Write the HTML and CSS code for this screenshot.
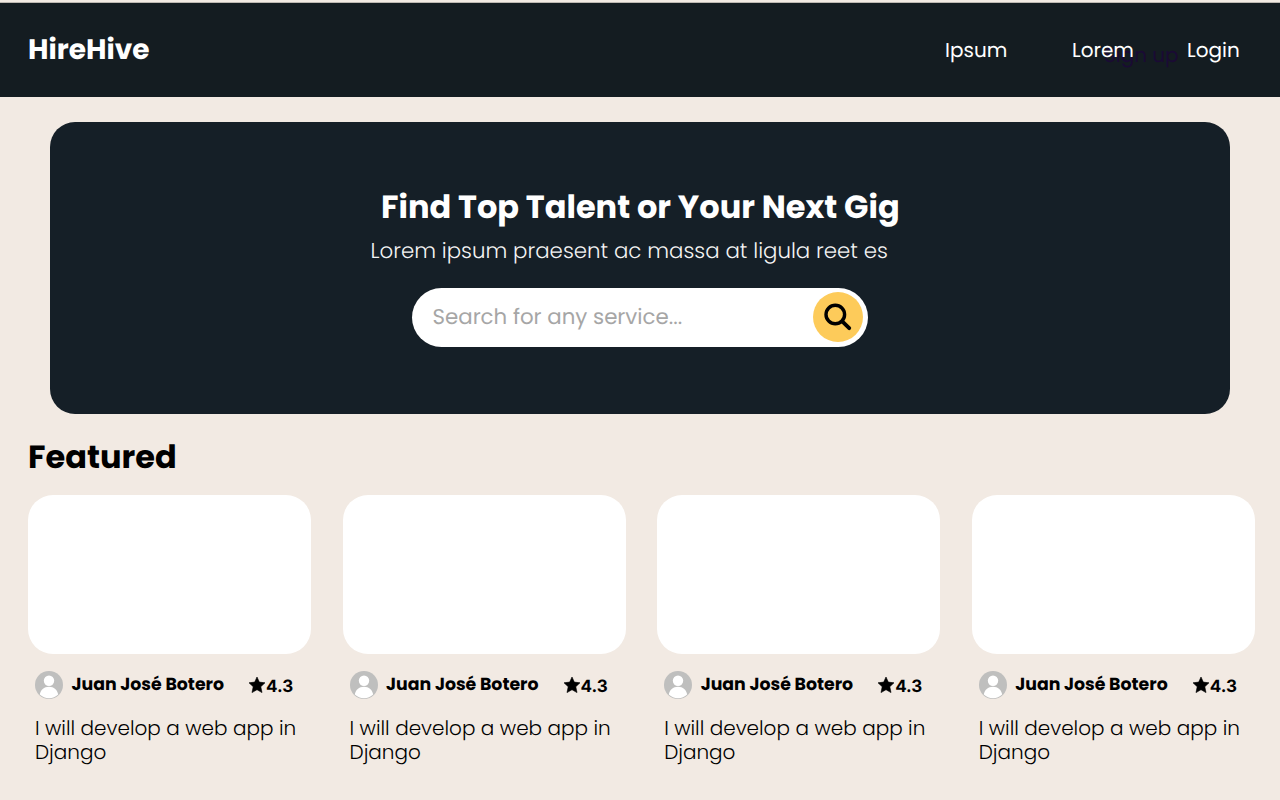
FILE: index.html
```html
<!DOCTYPE html>
<html lang="en">
<head>
<meta charset="utf-8">
<title>HireHive</title>
<link rel="stylesheet" href="styles.css">
</head>
<body>
<svg class="sprite" aria-hidden="true">
  <symbol id="avatar" viewBox="0 0 28 28">
    <circle cx="14" cy="14" r="14" fill="#bfbfbe"/>
    <circle cx="14" cy="9.800" r="5.200" fill="#fff"/>
    <path d="M4.800 23.600C5.500 18.800 9 15.700 14 15.700s8.500 3.100 9.200 7.900A13.300 13.300 0 0 1 14 27.200a13.300 13.300 0 0 1-9.200-3.600z" fill="#fff"/>
  </symbol>
  <symbol id="star" viewBox="0 0 16 16">
    <path d="M8 0l2.300 5.100 5.700.7-4.200 3.900 1.200 5.900L8 12.700l-5 2.900 1.200-5.900L0 5.800l5.700-.7z" stroke="#000" stroke-width=".6" stroke-linejoin="round"/>
  </symbol>
</svg>
<header class="navbar">
  <a class="logo">HireHive</a>
  <nav class="links">
    <a class="link link-ipsum">Ipsum</a>
    <a class="link link-lorem">Lorem</a>
    <a class="link link-login">Login</a>
    <a class="signup">Sign up</a>
  </nav>
</header>
<main>
  <section class="hero">
    <h1 class="hero-title">Find Top Talent or Your Next Gig</h1>
    <p class="hero-text">Lorem ipsum praesent ac massa at ligula reet es</p>
    <div class="search">
      <span class="placeholder">Search for any service...</span>
      <span class="search-button">
        <svg width="28" height="28" viewBox="0 0 28 28" fill="none" stroke="#000" stroke-linecap="round">
          <circle cx="11.300" cy="11.500" r="9.300" stroke-width="3.400"/>
          <path d="M18.500 18.700l6.700 6.500" stroke-width="3.900"/>
        </svg>
      </span>
    </div>
  </section>
  <section class="featured">
    <h2 class="featured-title">Featured</h2>
    <div class="cards">
      <article class="card">
        <div class="thumb"></div>
        <div class="meta"><svg class="avatar"><use href="#avatar"/></svg><span class="name">Juan José Botero</span><svg class="star"><use href="#star"/></svg><span class="rating">4.3</span></div>
        <p class="desc">I will develop a web app in<br>Django</p>
      </article>
      <article class="card">
        <div class="thumb"></div>
        <div class="meta"><svg class="avatar"><use href="#avatar"/></svg><span class="name">Juan José Botero</span><svg class="star"><use href="#star"/></svg><span class="rating">4.3</span></div>
        <p class="desc">I will develop a web app in<br>Django</p>
      </article>
      <article class="card">
        <div class="thumb"></div>
        <div class="meta"><svg class="avatar"><use href="#avatar"/></svg><span class="name">Juan José Botero</span><svg class="star"><use href="#star"/></svg><span class="rating">4.3</span></div>
        <p class="desc">I will develop a web app in<br>Django</p>
      </article>
      <article class="card">
        <div class="thumb"></div>
        <div class="meta"><svg class="avatar"><use href="#avatar"/></svg><span class="name">Juan José Botero</span><svg class="star"><use href="#star"/></svg><span class="rating">4.3</span></div>
        <p class="desc">I will develop a web app in<br>Django</p>
      </article>
    </div>
  </section>
</main>
</body>
</html>
```
FILE: styles.css
```css
* { box-sizing: border-box; }
body {
  margin: 0;
  padding-top: 2px;
  height: 800px;
  overflow: hidden;
  background: #f2eae3;
  color: #000;
  font-family: Poppins, Inter, sans-serif;
  text-rendering: geometricPrecision;
  white-space: nowrap;
}
h1, h2, p { margin: 0; }
.sprite { position: absolute; width: 0; height: 0; }

.navbar {
  position: relative;
  display: flex;
  justify-content: space-between;
  align-items: center;
  height: 95px;
  padding: 0 0 0 28px;
  border-top: 1px solid #bdb8b2;
  background: #141c21;
  color: #fff;
}
.logo { font-size: 28px; font-weight: 700; line-height: 40px; }
.links { display: flex; font-size: 20px; line-height: 30px; }
.link { position: relative; z-index: 1; }
.link-ipsum { width: 127px; }
.link-lorem { width: 115px; }
.link-login { width: 93px; }
.signup {
  position: absolute;
  left: 1104px;
  top: 37px;
  color: #1a0a34;
}

.hero {
  display: flex;
  flex-direction: column;
  align-items: center;
  height: 292px;
  margin: 25px 50px 0;
  padding-top: 62px;
  border-radius: 25px;
  background: #151f27;
  color: #fff;
}
.hero-title { width: 518px; font-size: 32px; font-weight: 700; line-height: 48px; }
.hero-text { width: 539px; font-size: 21.330px; font-weight: 300; line-height: 40px; color: #f4f4f4; }
.search {
  display: flex;
  justify-content: space-between;
  align-items: center;
  width: 456px;
  height: 59.500px;
  margin-top: 15.500px;
  padding: 0 5px 0 20.500px;
  border-radius: 30px;
  background: #fff;
}
.placeholder { padding-top: 1px; font-size: 21.330px; line-height: 30px; color: #a6a6a6; }
.search-button {
  display: grid;
  place-items: center;
  width: 50px;
  height: 50px;
  border-radius: 50%;
  background: #fdcb5a;
}

.featured { padding: 20px 25px 0 28px; }
.featured-title { font-size: 32px; font-weight: 700; line-height: 48px; }
.cards { display: grid; grid-template-columns: repeat(4, 1fr); gap: 31.300px; margin-top: 13px; }
.thumb { height: 159px; border-radius: 25px; background: #fff; }
.meta { display: flex; align-items: center; height: 28px; margin: 17px 0 0 7px; }
.avatar { flex: none; width: 28px; height: 28px; }
.name { width: 177.500px; margin-left: 8.500px; font-size: 17.330px; font-weight: 700; line-height: 26px; }
.star { flex: none; width: 16px; height: 16px; }
.rating { margin-left: 1px; padding-top: 4px; font-family: Inter, sans-serif; font-size: 17px; font-weight: 700; line-height: 26px; }
.desc { margin: 17px 0 0 7px; font-size: 20px; font-weight: 300; line-height: 24px; }
```
